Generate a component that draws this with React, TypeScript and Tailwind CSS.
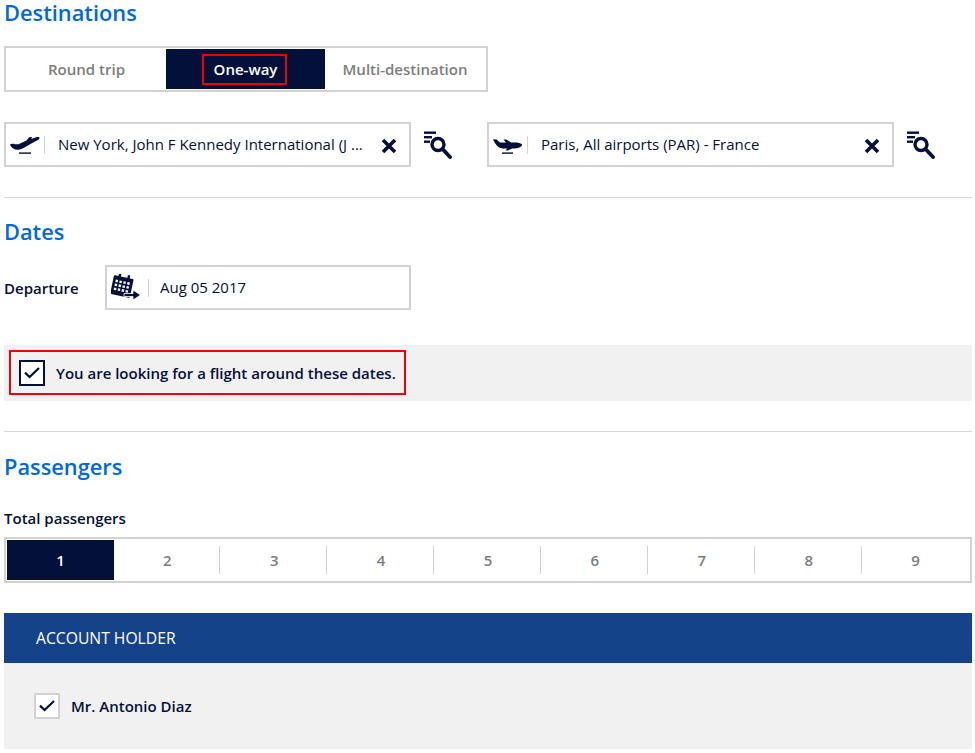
function PlaneUp() {
  return (
    <svg width="30" height="20" viewBox="0 0 30 20" className="shrink-0">
      <path fill="#03103a" d="M0 9.6 C1 8.6 3 8.6 5 9.2 L8.5 9.2 L16.5 5.4 L19 2.2 L22 2 L21.4 4 L26 2.2 C28 1.6 29.6 2 29.6 3 C29.4 4.4 27 5.6 25 6.6 L13 13.2 C10 14.8 6.5 15.2 4 14 C2 13 0.5 11.4 0 9.6 Z" />
      <rect x="9" y="17.4" width="12" height="1.4" fill="#03103a" />
    </svg>
  );
}

function PlaneDown() {
  return (
    <svg width="30" height="20" viewBox="0 0 30 20" className="shrink-0">
      <path fill="#03103a" d="M0 4.2 L3.6 4.6 L7 7.6 L13 7.6 L10.4 4.4 L13.4 4.4 L18 7.6 L24 7.6 C27 8 29.2 9 29.2 10 C28.4 12 25 13.4 22 13.4 L19 13.4 L15 15.4 L12.6 15.4 L14 13.4 L10 13.4 C6 13.2 3 11 0 4.2 Z" />
      <rect x="9" y="17.4" width="11" height="1.4" fill="#03103a" />
    </svg>
  );
}

function SearchList() {
  return (
    <svg width="29" height="30" viewBox="0 0 29 30" className="shrink-0">
      <rect x="1" y="1.5" width="12" height="2.4" fill="#03103a" />
      <rect x="1" y="6" width="8" height="2.4" fill="#03103a" />
      <rect x="1" y="10.5" width="6" height="2.4" fill="#03103a" />
      <circle cx="15" cy="14.5" r="6" fill="none" stroke="#03103a" strokeWidth="3.4" />
      <path d="M20 19.5 L27 27" stroke="#03103a" strokeWidth="3.8" strokeLinecap="round" />
    </svg>
  );
}

function CloseX() {
  return (
    <svg width="16" height="16" viewBox="0 0 16 16" className="shrink-0 translate-y-px">
      <path d="M2 2 L14 14 M14 2 L2 14" stroke="#03103a" strokeWidth="3.6" />
    </svg>
  );
}

function Calendar() {
  return (
    <svg width="30" height="27" viewBox="0 0 30 27" className="shrink-0">
      <g transform="rotate(12 11 12)">
        <rect x="1" y="3" width="20" height="19" rx="1" fill="#03103a" />
        <rect x="5.5" y="0" width="2.4" height="4" fill="#03103a" />
        <rect x="14.5" y="0" width="2.4" height="4" fill="#03103a" />
        {[7, 11, 15].map((y) =>
          [3.6, 7.6, 11.6, 15.6].map((x) => (
            <rect key={`${x}-${y}`} x={x} y={y} width="2.4" height="2.4" fill="#ffffff" />
          ))
        )}
      </g>
      <path fill="#03103a" stroke="#ffffff" strokeWidth="0.8" d="M13 19.5 H22 V16 L29.5 21 L22 26 V22.5 H13 Z" />
    </svg>
  );
}

function Check() {
  return (
    <svg width="16" height="12" viewBox="0 0 16 12">
      <path d="M1 5.6 L5.6 10 L15 1" fill="none" stroke="#03103a" strokeWidth="2.2" />
    </svg>
  );
}

function Heading({ children }: { children: string }) {
  return <h2 className="text-[21.8px] leading-[28px] font-semibold text-[#0068e5]">{children}</h2>;
}

function Field({ icon, text }: { icon: React.ReactNode; text: string }) {
  return (
    <div className="flex items-center gap-3">
      <div className="flex h-[45px] w-[407px] items-center border-2 border-[#d2d2d2] bg-white pl-1 pr-[12px]">
        <div className="flex h-[18px] w-[34px] items-center">{icon}</div>
        <div className="h-[18px] w-px bg-[#d2d2d2]" />
        <span className="ml-[13px] flex-1 truncate text-[15px] text-[#03103a]">{text}</span>
        <CloseX />
      </div>
      <SearchList />
    </div>
  );
}

export default function App() {
  return (
    <div className="h-[753px] w-[975px] overflow-hidden bg-white pl-1 pr-[3px] font-['Open_Sans',sans-serif] text-[#03103a]">
      <h2 className="text-[21.8px] leading-[26px] font-semibold text-[#0068e5]">Destinations</h2>

      <div className="mt-[20px] flex h-[46px] w-[484px] border-2 border-[#d2d2d2] p-px text-[15px] font-semibold text-[#7d7d7d]">
        <div className="flex w-[159px] items-center justify-center">Round trip</div>
        <div className="flex w-[159px] items-center justify-center bg-[#03103a] text-white">
          <span className="flex h-[31px] w-[85px] -translate-x-px items-center justify-center border-2 border-[#f00000] pl-[2px]">One-way</span>
        </div>
        <div className="flex w-[159px] items-center justify-center pl-px">Multi-destination</div>
      </div>

      <div className="mt-[30px] flex gap-[35px]">
        <Field icon={<PlaneUp />} text="New York, John F Kennedy International (J ..." />
        <Field icon={<PlaneDown />} text="Paris, All airports (PAR) - France" />
      </div>

      <hr className="mt-[30px] border-[#d8d8d8]" />

      <div className="mt-[20px]">
        <Heading>Dates</Heading>
      </div>

      <div className="mt-[19px] flex items-center">
        <span className="w-[101px] pt-[2px] text-[15px] font-semibold">Departure</span>
        <div className="flex h-[45px] w-[306px] items-center border-2 border-[#d2d2d2] pl-1">
          <div className="flex h-[27px] w-[37px] items-center"><Calendar /></div>
          <div className="h-[18px] w-px bg-[#d2d2d2]" />
          <span className="ml-[11px] text-[15px]">Aug 05 2017</span>
        </div>
      </div>

      <div className="mt-[35px] flex h-[56px] items-start bg-[#f1f1f1] pt-[5px] pl-[5px]">
        <div className="flex h-[45px] w-[397px] items-center border-2 border-[#f00000] pl-2">
          <div className="flex size-[26px] items-center justify-center border-2 border-[#03103a] bg-white">
            <Check />
          </div>
          <span className="ml-[11px] pt-[2px] text-[15px] font-semibold">You are looking for a flight around these dates.</span>
        </div>
      </div>

      <hr className="mt-[30px] border-[#d8d8d8]" />

      <div className="mt-[21px]">
        <Heading>Passengers</Heading>
      </div>

      <div className="mt-[28px] text-[15px] leading-[19px] font-semibold">Total passengers</div>

      <div className="mt-[9px] flex h-[46px] border-2 border-[#d2d2d2] p-px text-[15px] font-semibold text-[#7d7d7d]">
        {[1, 2, 3, 4, 5, 6, 7, 8, 9].map((n) => (
          <div
            key={n}
            className={`relative flex flex-1 items-center justify-center ${n === 1 ? "bg-[#03103a] text-white" : ""}`}
          >
            {n}
            {n > 1 && n < 9 ? <span className="absolute top-[6px] right-[0.5px] h-[28px] w-px bg-[#d2d2d2]" /> : null}
          </div>
        ))}
      </div>

      <div className="mt-[30px] flex h-[50px] items-center bg-[#15438a] pt-[2px] pl-8 text-[15.7px] text-white">ACCOUNT HOLDER</div>

      <div className="flex h-[86px] items-center bg-[#f1f1f1] pl-[30px]">
        <div className="flex size-[26px] items-center justify-center border-2 border-[#d2d2d2] bg-white">
          <Check />
        </div>
        <span className="ml-[11px] text-[15px] font-semibold">Mr. Antonio Diaz</span>
      </div>
    </div>
  );
}
